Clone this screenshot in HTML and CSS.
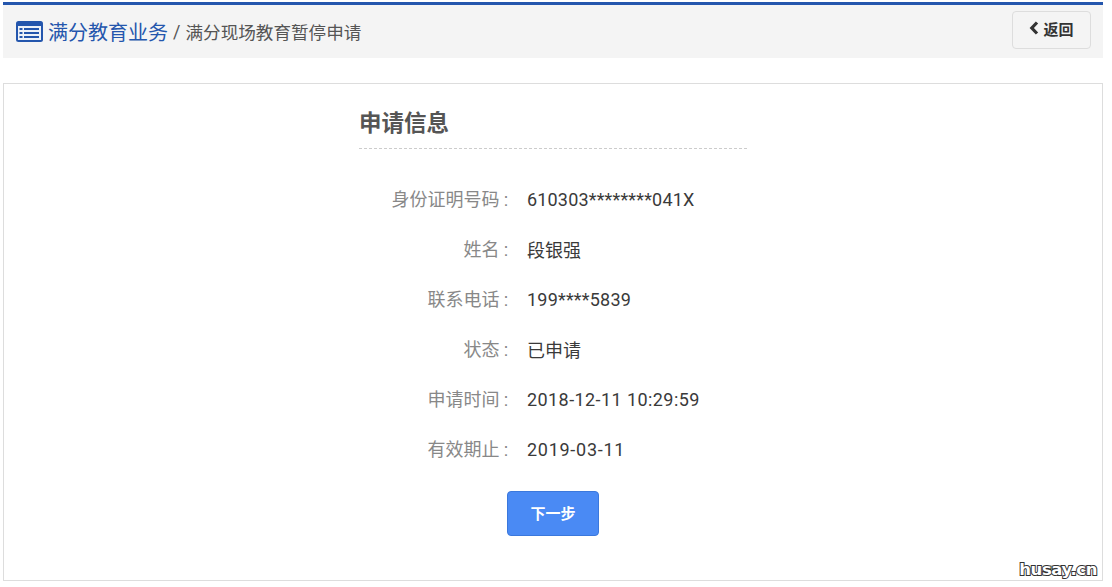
FILE: index.html
```html
<!DOCTYPE html>
<html lang="zh-CN">
<head>
<meta charset="utf-8">
<title>满分现场教育暂停申请</title>
<link rel="stylesheet" href="styles.css">
</head>
<body>
<header class="topbar">
  <div class="crumbs">
    <svg class="list-icon" viewBox="0 0 27 21" width="27" height="21" aria-hidden="true">
      <rect x="0" y="0" width="27" height="21" rx="2.5" fill="#2456ad"/>
      <rect x="2" y="5" width="23" height="14" fill="#eef2f8"/>
      <g fill="#2456ad">
        <rect x="3.5" y="7" width="3" height="2"/>
        <rect x="3.5" y="11" width="3" height="2"/>
        <rect x="3.5" y="15" width="3" height="2"/>
        <rect x="8" y="7" width="15" height="2"/>
        <rect x="8" y="11" width="15" height="2"/>
        <rect x="8" y="15" width="15" height="2"/>
      </g>
    </svg>
    <a class="crumb-root">满分教育业务</a>
    <span class="crumb-sep">/</span>
    <span class="crumb-page">满分现场教育暂停申请</span>
  </div>
  <button class="back" type="button">
    <svg viewBox="0 0 10 14" width="10" height="14" aria-hidden="true"><path d="M8 1.5 2.8 7 8 12.5" fill="none" stroke="#333" stroke-width="3.2"/></svg>
    返回
  </button>
</header>
<main class="panel">
  <section class="form">
    <h2 class="title">申请信息</h2>
    <dl class="rows">
      <div class="row"><dt>身份证明号码<span class="colon">:</span></dt><dd class="idno">610303********041X</dd></div>
      <div class="row"><dt>姓名<span class="colon">:</span></dt><dd>段银强</dd></div>
      <div class="row"><dt>联系电话<span class="colon">:</span></dt><dd class="phone">199****5839</dd></div>
      <div class="row"><dt>状态<span class="colon">:</span></dt><dd>已申请</dd></div>
      <div class="row"><dt>申请时间<span class="colon">:</span></dt><dd class="datetime">2018-12-11 10:29:59</dd></div>
      <div class="row"><dt>有效期止<span class="colon">:</span></dt><dd class="date">2019-03-11</dd></div>
    </dl>
    <div class="actions"><button class="next" type="button">下一步</button></div>
  </section>
  <div class="watermark">husay.cn</div>
</main>
</body>
</html>
```
FILE: styles.css
```css
* { box-sizing: border-box; }
html, body { margin: 0; background: #fff; }
body {
  padding: 2px 9px 0 3px;
  height: 587px;
  overflow: hidden;
  font-family: Roboto, "Liberation Sans", "Noto Sans CJK SC", sans-serif;
}
.topbar {
  height: 56px;
  background: #f4f4f4;
  border-top: 3px solid #2456ad;
  display: flex;
  align-items: center;
  justify-content: space-between;
  padding: 0 12px 0 13px;
}
.crumbs { display: flex; align-items: center; margin-top: -1px; }
.list-icon { margin-right: 5px; }
.crumb-root { font-size: 20px; color: #2456ad; }
.crumb-sep { font-size: 18px; color: #555; margin: 0 5px; }
.crumb-page { font-size: 17.6px; color: #555; }
.back {
  width: 79px;
  height: 38px;
  margin-top: -3px;
  background: #f4f4f4;
  border: 1px solid #ddd;
  border-radius: 4px;
  font: bold 15px/1 "Noto Sans CJK SC", sans-serif;
  color: #333;
  display: flex;
  align-items: center;
  justify-content: center;
  gap: 4px;
  padding: 0 0 4px;
}
.panel {
  position: relative;
  margin-top: 25px;
  height: 498px;
  border: 1px solid #ddd;
}
.form { width: 388px; margin-left: 355px; }
.title {
  margin: 0;
  height: 65px;
  padding: 21px 0 0;
  font: bold 22.5px/32px "Noto Sans CJK SC", sans-serif;
  color: #555;
  border-bottom: 1px dashed #ccc;
}
.rows { margin: 25px 0 0; }
.row { display: flex; align-items: center; height: 50px; font-size: 18px; }
.row dt {
  width: 168px;
  padding-right: 18.5px;
  text-align: right;
  color: #888;
  position: relative;
  top: -1px;
}
.colon { margin-left: 4px; font-family: "Liberation Sans", sans-serif; }
.row dd { margin: 0; color: #3a3a3a; }
.row .idno { letter-spacing: 0.17px; }
.row .phone { letter-spacing: 0.2px; }
.row .datetime { letter-spacing: 0.42px; }
.row .date { letter-spacing: 0.72px; }
.actions { display: flex; justify-content: center; margin-top: 17px; }
.next {
  width: 92px;
  height: 45px;
  border: 1px solid #3b78dc;
  border-radius: 4px;
  background: #4a8af4;
  color: #fff;
  font: bold 15px "Noto Sans CJK SC", sans-serif;
  padding: 0 0 2px;
}
.watermark {
  position: absolute;
  right: 5px;
  bottom: 1px;
  font: bold 16.5px "DejaVu Sans", sans-serif;
  letter-spacing: -0.4px;
  color: #fff;
  -webkit-text-stroke: 2px #333;
  paint-order: stroke fill;
}
```
